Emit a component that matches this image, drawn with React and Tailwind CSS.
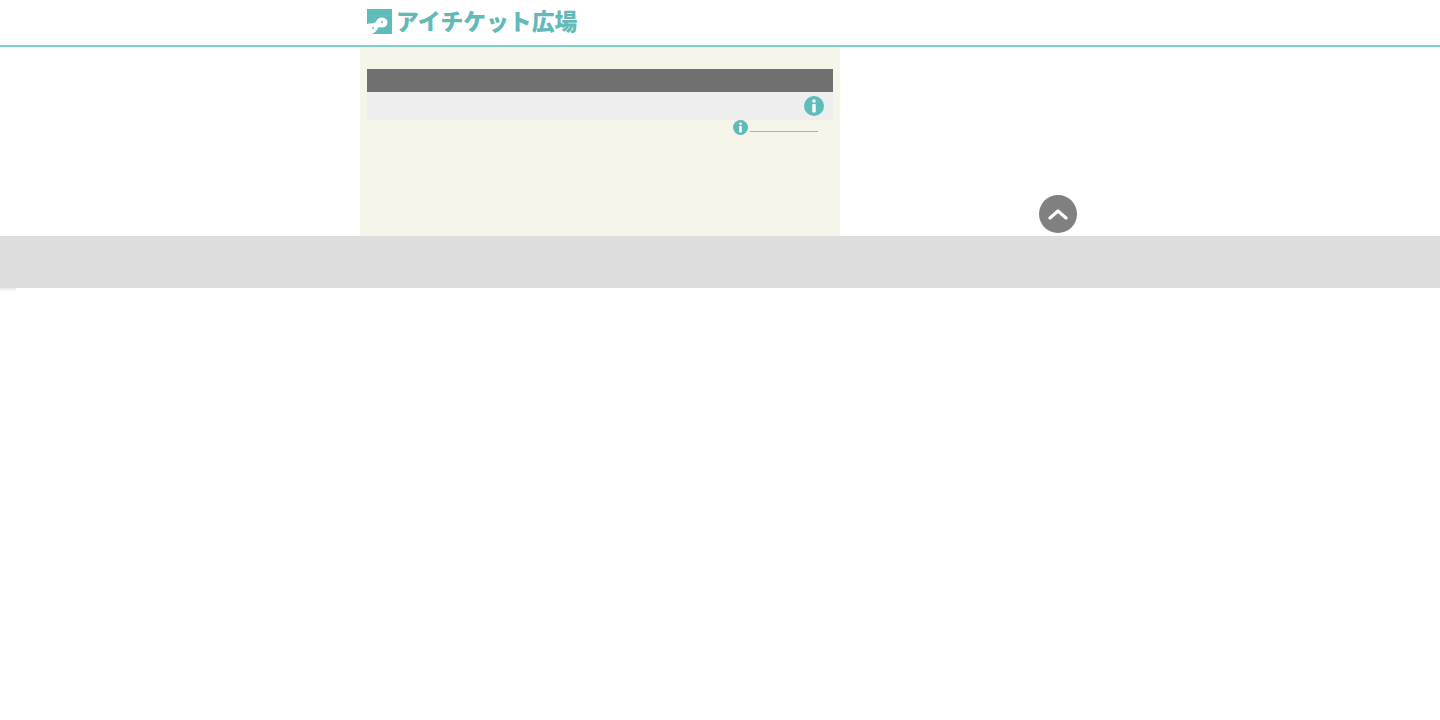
export default function App() {
  const teal = "#5fbdb9";
  return (
    <div className="relative bg-white min-h-[720px] font-['Noto_Sans_CJK_JP',sans-serif]">
      <header className="h-[47px] border-b-2 border-[#7fd0cb] bg-white">
        <div className="w-[480px] ml-[360px] pl-[7px] pt-[9px] flex items-start">
          <svg width="26" height="25" viewBox="0 0 26 25" className="block shrink-0">
            <rect width="25" height="25" fill={teal} />
            <path d="M0 15 C3 14 6 15 9 13 C10 9 14 7.5 17.5 9 C21 10.5 21.5 15 18.5 17.5 C16 19 13.5 18.5 11.5 18 C10.5 21 8 23.5 5 25 L0 25 Z" fill="#fff" />
            <circle cx="15" cy="13" r="1" fill={teal} />
            <circle cx="6" cy="19" r="1" fill={teal} />
          </svg>
          <span className="ml-[3px] -mt-[1px] text-[22.8px] leading-[25px] font-black text-[#62b9b5] tracking-normal whitespace-nowrap">
            アイチケット広場
          </span>
        </div>
      </header>

      <main className="w-[480px] h-[189px] ml-[360px] bg-[#f6f5ea] px-[7px] pt-[22px]">
        <div className="h-[23px] w-[466px] bg-[#707070]" />
        <div className="h-[28px] w-[466px] bg-[#eeeeee] flex items-center justify-end pr-[9px]">
          <InfoIcon size={20} color={teal} />
        </div>
        <div className="flex justify-end items-start w-[451px]">
          <InfoIcon size={15} color={teal} />
          <div className="ml-[2px] mt-[11px] w-[68px] h-px bg-[#6fcbc6]" />
        </div>
      </main>

      <footer className="h-[52px] bg-[#dddddd]" />
      <div className="absolute left-0 top-[288px] w-[16px] h-[4px] bg-gradient-to-b from-[#eaeaea] to-white" />

      <button className="absolute left-[1039px] top-[195px] w-[38px] h-[38px] rounded-full bg-[#808080] flex items-center justify-center">
        <svg width="20" height="12" viewBox="0 0 20 12" fill="none">
          <path d="M2 10 L10 3 L18 10" stroke="#fff" strokeWidth="3.2" strokeLinecap="round" strokeLinejoin="round" />
        </svg>
      </button>
    </div>
  );
}

function InfoIcon({ size, color }) {
  return (
    <svg width={size} height={size} viewBox="0 0 20 20" className="block shrink-0">
      <circle cx="10" cy="10" r="10" fill={color} />
      <circle cx="10" cy="5" r="1.8" fill="#fff" />
      <rect x="8.3" y="8" width="3.4" height="8.5" rx="0.8" fill="#fff" />
    </svg>
  );
}
